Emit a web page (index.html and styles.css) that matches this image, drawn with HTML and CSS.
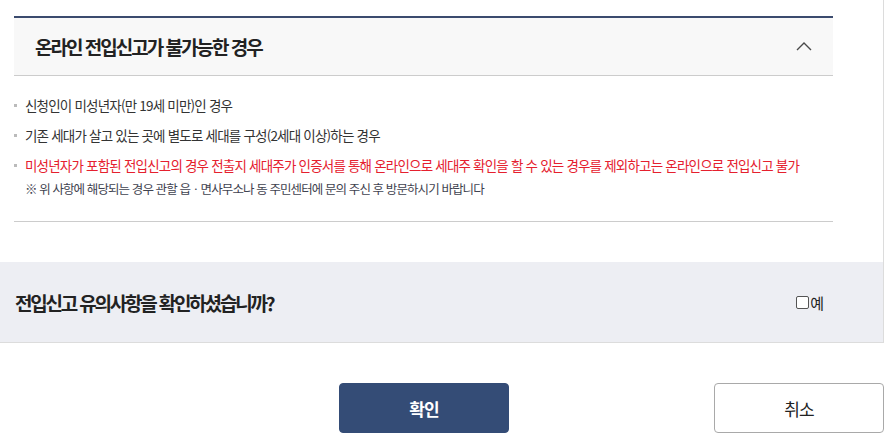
FILE: index.html
```html
<!DOCTYPE html>
<html lang="ko">
<head>
<meta charset="utf-8">
<title>전입신고 유의사항</title>
<link rel="stylesheet" href="styles.css">
</head>
<body>
<div class="page">
  <div class="frame">
    <section class="panel">
      <div class="panel-head">
        <h2 class="panel-title">온라인 전입신고가 불가능한 경우</h2>
        <svg class="chevron" width="16" height="10" viewBox="0 0 16 10" aria-hidden="true">
          <polyline points="1,9 8,2 15,9" fill="none" stroke="#4a4a4a" stroke-width="1.4"/>
        </svg>
      </div>
      <div class="panel-body">
        <ul class="rules">
          <li>신청인이 미성년자(만 19세 미만)인 경우</li>
          <li>기존 세대가 살고 있는 곳에 별도로 세대를 구성(2세대 이상)하는 경우</li>
          <li class="warn">미성년자가 포함된 전입신고의 경우 전출지 세대주가 인증서를 통해 온라인으로 세대주 확인을 할 수 있는 경우를 제외하고는 온라인으로 전입신고 불가</li>
        </ul>
        <p class="note">※ 위 사항에 해당되는 경우 관할 읍ㆍ면사무소나 동 주민센터에 문의 주신 후 방문하시기 바랍니다</p>
      </div>
    </section>
    <div class="confirm">
      <p class="confirm-q">전입신고 유의사항을 확인하셨습니까?</p>
      <label class="confirm-check"><input type="checkbox" class="chk">예</label>
    </div>
  </div>
  <div class="actions">
    <button class="btn btn-ok" type="button">확인</button>
    <button class="btn btn-cancel" type="button">취소</button>
  </div>
</div>
</body>
</html>
```
FILE: styles.css
```css
* { box-sizing: border-box; }
html, body { margin: 0; padding: 0; background: #fff; }
body {
  font-family: "Noto Sans CJK KR", "Noto Sans", sans-serif;
  color: #333;
}
.page { width: 884px; }
.frame {
  border-right: 1px solid #dcdcdc;
  border-bottom: 1px solid #dcdcdc;
  padding-top: 16px;
}
.panel { margin: 0 50px 40px 14px; }
.panel-head {
  display: flex;
  align-items: center;
  justify-content: space-between;
  height: 60px;
  background: #f8f8f8;
  border-top: 2px solid #3b4b6e;
  border-bottom: 1px solid #cccccc;
  padding: 0 21px 0 21px;
}
.panel-title {
  margin: 0;
  font-size: 19px;
  font-weight: 700;
  letter-spacing: -2px;
  color: #222;
  line-height: 24px;
}
.chevron { display: block; margin-top: -2px; }
.panel-body {
  padding: 19px 0 23px 0;
  border-bottom: 1px solid #cccccc;
}
.rules { list-style: none; margin: 0; padding: 0; }
.rules li {
  display: flex;
  align-items: center;
  font-size: 13.5px;
  line-height: 20px;
  letter-spacing: -0.8px;
  margin-bottom: 10px;
  color: #333;
}
.rules li::before {
  content: "";
  flex: none;
  width: 3px;
  height: 3px;
  background: #bbbbbb;
  margin-right: 8px;
}
.rules li.warn { color: #e5202e; margin-bottom: 5px; }
.note {
  margin: 0;
  padding-left: 11px;
  font-size: 12.5px;
  line-height: 18px;
  letter-spacing: -0.9px;
  color: #3f4350;
}
.confirm {
  display: flex;
  align-items: center;
  justify-content: space-between;
  height: 80px;
  background: #edeef3;
  padding: 0 60px 0 15px;
}
.confirm-q {
  margin: 0;
  font-size: 19px;
  font-weight: 700;
  letter-spacing: -2.2px;
  color: #222;
}
.confirm-check {
  display: flex;
  align-items: center;
  font-size: 15px;
  color: #222;
  letter-spacing: -1px;
}
.chk {
  appearance: none;
  -webkit-appearance: none;
  width: 13px;
  height: 13px;
  margin: 1px 1px 0 0;
  border: 1px solid #555;
  border-radius: 2px;
  background: #fff;
}
.actions {
  display: flex;
  padding: 40px 0 0 339px;
}
.btn {
  width: 170px;
  height: 50px;
  border-radius: 4px;
  font-family: "Noto Sans CJK KR", "Noto Sans", sans-serif;
  font-size: 17px;
  letter-spacing: -1px;
  cursor: pointer;
}
.btn-ok {
  background: #344c76;
  border: 1px solid #344c76;
  color: #fff;
  font-weight: 700;
}
.btn-cancel {
  margin-left: auto;
  background: #fff;
  border: 1px solid #a9a9a9;
  color: #222;
  font-weight: 400;
}
```
